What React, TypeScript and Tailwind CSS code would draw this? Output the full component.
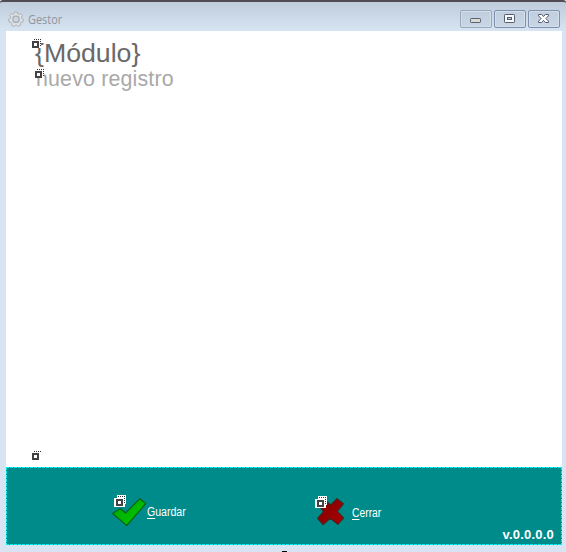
import type { ReactNode } from "react";

function Handle({ dots = true, light = false }: { dots?: boolean; light?: boolean }) {
  return (
    <svg width="12" height="12" shapeRendering="crispEdges" className="block">
      <path d={light ? "M3 0h9v9h-1v3H0V3h3z" : "M2 0h8v10H0V2h2z"} fill="#fff" />
      <path d={light ? "M2 4h7v7H2z" : "M1 3h7v7H1z"} fill="#424242" />
      <path d={light ? "M4 6h3v3H4z" : "M3 5h3v3H3z"} fill="#fff" />
      <path d={light ? "M4 1.5h7" : "M3 1.5h7"} stroke="#333" strokeDasharray="1 1" />
      {dots && <path d={light ? "M10.5 1v8" : "M9.5 1v8"} stroke="#333" strokeDasharray="1 1" />}
    </svg>
  );
}

function WindowButton({ children, label, soft = false }: { children: ReactNode; label: string; soft?: boolean }) {
  return (
    <button
      aria-label={label}
      className={`flex h-[18px] w-8 items-center justify-center rounded-[2px] border bg-gradient-to-b from-[#c1cedd] to-[#c7d6e6] shadow-[inset_0_0_0_1px_#d3dfeb] ${soft ? "border-[#98a7b9]" : "border-[#7f90ad]"}`}
    >
      {children}
    </button>
  );
}

function Gear() {
  return (
    <svg width="16" height="16" viewBox="0 0 16 16" className="block">
      <path
        d="M6.4 1h3l.4 2 1.3.5 1.8-1 1.6 2-1 1.7.4 1.3 1.6.8-.5 2.7-1.9.2-.8 1.1.3 2-2.5 1.2-1.4-1.4H7.4L6 15.5l-2.5-1.2.3-2-.8-1.1-2-.2L.6 8.3l1.7-.8.4-1.3-1-1.7 1.7-2 1.8 1L6 3z"
        fill="#dfe0e2"
        stroke="#a9adb4"
        strokeWidth=".9"
      />
      <circle cx="8" cy="8.2" r="3.2" fill="#c8d4e2" stroke="#a0a5ad" strokeWidth="1.1" />
    </svg>
  );
}

export default function App() {
  return (
    <div className="flex h-[552px] w-[566px] flex-col overflow-hidden bg-[#d8e4f1] font-['Liberation_Sans',Arial,sans-serif]">
      <header className="flex h-[31px] shrink-0 items-start rounded-t-[3px] border-t-2 border-[#514b52] bg-gradient-to-b from-[#bfccdb] to-[#d7e4f2] pr-[6px] pl-2">
        <div className="mt-[9px]"><Gear /></div>
        <span className="mt-[10px] ml-1 origin-left scale-x-[.91] font-['Open_Sans',sans-serif] text-[12px] leading-4 text-[#8d949d]">Gestor</span>
        <div className="mt-2 ml-auto flex gap-[2px]">
          <WindowButton label="Minimizar" soft>
            <svg width="12" height="6" className="mt-[3px]">
              <rect x=".5" y=".5" width="10" height="4" rx=".7" fill="#d9d9d6" stroke="#5b616d" />
            </svg>
          </WindowButton>
          <WindowButton label="Maximizar">
            <svg width="12" height="10">
              <rect x=".5" y=".5" width="10" height="8" rx=".7" fill="#fafafa" stroke="#555c71" />
              <rect x="3.5" y="3.5" width="4" height="2" fill="#bdcbdc" stroke="#555c71" />
            </svg>
          </WindowButton>
          <WindowButton label="Cerrar ventana">
            <svg width="12" height="10" viewBox="0 0 12 10">
              <path d="M.5.5h3.2L5.5 2.6 7.3.5h3.2v1.3L7.9 4.5l2.6 2.7v1.3H7.3L5.5 6.4 3.7 8.5H.5V7.2l2.6-2.7L.5 1.8z" fill="#fff" stroke="#555c71" />
            </svg>
          </WindowButton>
        </div>
      </header>

      <main className="relative mr-1 ml-[6px] h-[436px] shrink-0 bg-white pl-[29px]">
        <h1 className="pt-[7px] text-[26.7px] leading-[30px] text-[#696969]">{"{Módulo}"}</h1>
        <p className="-mt-[1px] ml-px text-[21.4px] leading-6 tracking-[.16px] text-[#a9a9a9]">nuevo registro</p>
        <div className="absolute top-[7px] left-[25px]"><Handle /></div>
        <div className="absolute top-[37px] left-[28px]"><Handle /></div>
        <div className="absolute top-[419px] left-[25px]"><Handle dots={false} /></div>
      </main>

      <footer className="relative mr-1 ml-[6px] flex h-[78px] shrink-0 bg-[#008b8b] text-white">
        <svg width="556" height="78" shapeRendering="crispEdges" className="pointer-events-none absolute inset-0">
          <path d="M0 .5h556M555.5 0v78M0 77.5h556M.5 0v78" fill="none" stroke="#00f0f0" strokeDasharray="3 1" />
        </svg>
        <button className="relative ml-[105px] flex h-[90px] w-[80px] items-center text-left">
          <svg width="36" height="32" viewBox="0 0 36 32" className="shrink-0">
            <defs>
              <linearGradient id="green" x1="0" y1="0" x2="1" y2="1">
                <stop offset="0" stopColor="#00a300" />
                <stop offset="1" stopColor="#00cc00" />
              </linearGradient>
            </defs>
            <path d="M1.5 17.5 9.5 12.5l5 4.5L28.8 2.8l6 4.7L15.8 29.5z" fill="url(#green)" stroke="#0a6216" strokeWidth="1.2" strokeLinejoin="round" />
          </svg>
          <span className="origin-left scale-x-[.88] text-[12px] leading-4"><u className="underline-offset-2">G</u>uardar</span>
          <span className="absolute top-[28px] left-[3px]"><Handle light /></span>
        </button>
        <button className="relative ml-[124px] flex h-[90px] w-[80px] items-center text-left">
          <svg width="30" height="30" viewBox="0 0 30 30" className="ml-[1px] shrink-0">
            <defs>
              <linearGradient id="red" x1="0" y1="0" x2="1" y2="1">
                <stop offset="0" stopColor="#7c0000" />
                <stop offset="1" stopColor="#ae0000" />
              </linearGradient>
            </defs>
            <path d="m2 7.5 6-5.5 6.7 6L21 1.7l6.3 5.1-6 7.5 6.2 6.7-5.7 6.3-7.5-6-7.2 6.2-5.5-6.2 6-6.6z" fill="url(#red)" stroke="#50221f" strokeWidth="1.2" strokeLinejoin="round" />
          </svg>
          <span className="mt-[2px] ml-[6px] origin-left scale-x-[.86] text-[12px] leading-4"><u className="underline-offset-2">C</u>errar</span>
          <span className="absolute top-[29px] left-0"><Handle light /></span>
        </button>
        <span className="mt-[60px] mr-[8px] ml-auto text-[13px] leading-4 font-bold tracking-[.2px]">v.0.0.0.0</span>
      </footer>
      <div className="mt-auto ml-[282px] h-px w-[5px] bg-black" />
    </div>
  );
}
